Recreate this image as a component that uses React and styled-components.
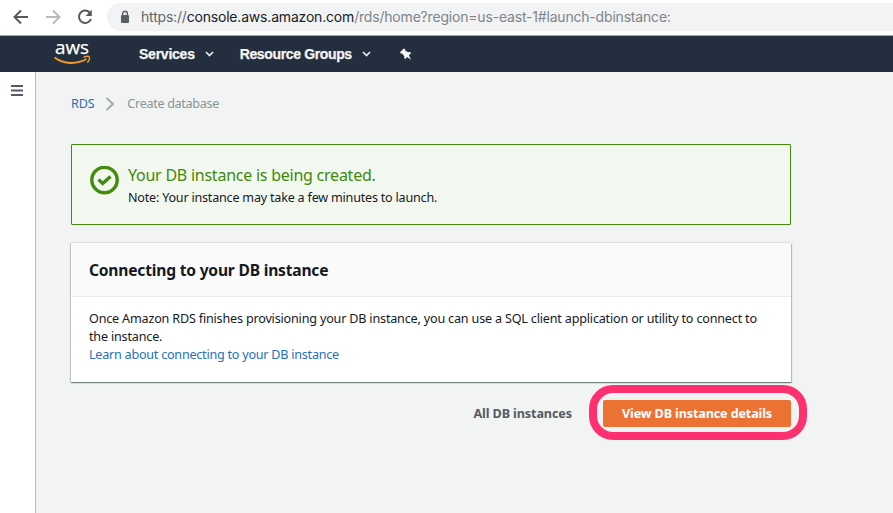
import React from 'react';
import styled, { createGlobalStyle } from 'styled-components';

const Global = createGlobalStyle`
  * { box-sizing: border-box; }
  body { margin: 0; background: #f2f3f3; overflow: hidden; }
  button { font: inherit; border: 0; margin: 0; }
`;

const Page = styled.div`
  height: 513px;
  display: flex;
  flex-direction: column;
  font-family: 'Noto Sans', 'Open Sans', sans-serif;
  font-size: 12.6px;
  line-height: 18px;
  color: #16191f;
  white-space: nowrap;
`;

const BrowserBar = styled.div`
  flex: none;
  height: 36px;
  display: flex;
  align-items: flex-start;
  background: #fff;
  border-bottom: 1px solid #a9abb0;
`;

const BrowserIcons = styled.div`
  width: 107px;
  padding: 8px 0 0 12px;
  display: flex;
  gap: 14px;
`;

const AddressBar = styled.div`
  flex: 1;
  height: 28px;
  margin-top: 3px;
  padding-left: 13px;
  display: flex;
  align-items: center;
  background: #f1f3f4;
  border-radius: 14px 0 0 14px;
`;

const Url = styled.div`
  margin-left: 11px;
  font: 14px/28px Inter, sans-serif;
  letter-spacing: ${(p) => p.$spacing}px;
  color: #808488;
`;
const UrlScheme = styled.span`color: #63676b;`;
const UrlHost = styled.span`color: #202124;`;

const ConsoleNav = styled.nav`
  flex: none;
  height: 36px;
  display: flex;
  align-items: center;
  background: #232f3e;
  color: #f5f5f5;
`;

const Logo = styled.svg`
  width: 40px;
  height: 36px;
  margin-left: 52px;
  overflow: visible;
`;

const NavItem = styled.div`
  display: flex;
  align-items: center;
  gap: 10px;
  margin-left: ${(p) => p.$gap}px;
  font: bold 14px/36px 'Liberation Sans', sans-serif;
  letter-spacing: ${(p) => p.$spacing || 0}px;
  -webkit-text-stroke: 0.25px #f5f5f5;
`;

const Workspace = styled.div`
  flex: 1;
  display: flex;
`;

const Sidebar = styled.aside`
  width: 36px;
  padding: 13px 0 0 11px;
  background: #fff;
  border-right: 1px solid #b4bbbd;
`;

const Main = styled.main`
  width: 721px;
  margin-left: 35px;
  padding-top: 23px;
`;

const Breadcrumbs = styled.div`
  display: flex;
  align-items: center;
  height: 18px;
  color: #879596;
`;

const Text = styled.span`
  letter-spacing: ${(p) => p.$spacing || 0}px;
`;

const Link = styled.a`
  color: #1f70b8;
  letter-spacing: ${(p) => p.$spacing || 0}px;
`;

const Alert = styled.section`
  height: 81px;
  margin-top: 31px;
  padding: 20px 0 0 18px;
  width: 720px;
  display: flex;
  gap: 8px;
  background: #f2f8f0;
  border: 1px solid #438a0d;
  border-radius: 1px;
`;

const AlertIcon = styled.svg`
  flex: none;
  width: 30px;
  height: 30px;
  margin-top: 1px;
`;

const AlertTitle = styled.h1`
  margin: 0;
  font-size: 16px;
  font-weight: 400;
  line-height: 20px;
  color: #3f880b;
  letter-spacing: ${(p) => p.$spacing}px;
`;

const AlertNote = styled.div`
  margin-top: 3px;
  line-height: 20px;
  letter-spacing: ${(p) => p.$spacing}px;
`;

const Card = styled.section`
  width: 720px;
  height: 139px;
  margin-top: 18px;
  background: #fff;
  box-shadow: 0 1px 1px rgba(0, 28, 36, 0.4), 1px 1px 1px rgba(0, 28, 36, 0.2),
    -1px 0 1px rgba(0, 28, 36, 0.15), 0 -1px 0 #e3e6e6;
`;

const CardHeader = styled.h2`
  height: 54px;
  margin: 0;
  padding-left: 18px;
  font-size: 15.6px;
  font-weight: 700;
  line-height: 55px;
  letter-spacing: ${(p) => p.$spacing}px;
  background: #fafafa;
  border-bottom: 1px solid #eaeded;
`;

const CardBody = styled.div`
  display: flex;
  flex-direction: column;
  padding: 13px 18px;
`;

const Actions = styled.div`
  display: flex;
  justify-content: flex-end;
  align-items: center;
  width: 736px;
  margin-top: 3px;
`;

const PlainButton = styled.button`
  padding: 2px 0 0;
  background: none;
  color: #545b64;
  font-weight: 700;
  letter-spacing: ${(p) => p.$spacing}px;
`;

const Highlight = styled.div`
  width: 218px;
  height: 55px;
  margin-left: 17px;
  padding: 7px 6px;
  border: 8px solid #ff3070;
  border-radius: 24px;
`;

const PrimaryButton = styled.button`
  width: 188px;
  height: 27px;
  padding: 0;
  display: block;
  background: #ec7233;
  border-radius: 2px;
  color: #fff;
  font-weight: 700;
  line-height: 27px;
  letter-spacing: ${(p) => p.$spacing}px;
`;

const Svg = styled.svg`
  flex: none;
  display: block;
  margin-left: ${(p) => p.$left || 0}px;
  margin-right: ${(p) => p.$right || 0}px;
`;

const Arrow = ({ color, flip }) => (
  <Svg width="18" height="18" viewBox="0 0 18 18" fill="none" stroke={color} strokeWidth="2">
    <path d={flip ? 'M2 9H15M9 2.5L15.5 9L9 15.5' : 'M16 9H3M9 2.5L2.5 9L9 15.5'} />
  </Svg>
);

const Caret = () => (
  <Svg width="9" height="6" viewBox="0 0 9 6" fill="none" stroke="#e8eaed" strokeWidth="1.7">
    <path d="M1 1L4.5 4.5L8 1" />
  </Svg>
);

export default function App() {
  return (
    <Page>
      <Global />
      <BrowserBar>
        <BrowserIcons>
          <Arrow color="#56595e" />
          <Arrow color="#b7b9bb" flip />
          <Svg width="18" height="18" viewBox="0 0 18 18" fill="none">
            <path d="M13.7 4.5A6.2 6.2 0 1 0 15 11" stroke="#56595e" strokeWidth="2" />
            <path d="M15.8 1.8V8H9.6Z" fill="#56595e" />
          </Svg>
        </BrowserIcons>
        <AddressBar>
          <Svg width="10" height="14" viewBox="0 0 10 14">
            <path d="M2.6 6V3.6a2.4 2.4 0 0 1 4.8 0V6" fill="none" stroke="#5a5d61" strokeWidth="1.4" />
            <rect x="1" y="5" width="8" height="8" rx="1" fill="#5a5d61" />
          </Svg>
          <Url $spacing={-0.19}>
            <UrlScheme>https://</UrlScheme>
            <UrlHost>console.aws.amazon.com</UrlHost>
            /rds/home?region=us-east-1#launch-dbinstance:
          </Url>
        </AddressBar>
      </BrowserBar>

      <ConsoleNav>
        <Logo viewBox="0 0 40 36">
          <text x="3" y="18" textLength="34" lengthAdjust="spacingAndGlyphs" fill="#fff" stroke="#fff" strokeWidth="0.25" fontFamily="Open Sans, sans-serif" fontSize="18.5">aws</text>
          <path d="M2.5 21.5C12 28.5 25 28.5 34.5 23" fill="none" stroke="#f79b22" strokeWidth="2" />
          <path d="M31.5 21.3C34 20.2 36.5 20 37.3 20.9C37.8 22.2 36.8 25 35.2 26.6" fill="none" stroke="#f79b22" strokeWidth="1.4" />
        </Logo>
        <NavItem $gap={47} $spacing={-0.24}>Services<Caret /></NavItem>
        <NavItem $gap={26} $spacing={-0.36}>Resource Groups<Caret /></NavItem>
        <Svg $left={29} width="12" height="12" viewBox="0 0 12 12" fill="#f5f5f5">
          <path d="M3.8 .4L5.3 1.3L5.1 2.6L8.2 4.3L10.1 3.9L11.2 5.1L8.9 7.2L11 11.7L7.1 9L5.4 11L4.2 10L4.3 8L1.8 5.5L.5 5.4L.2 3.9Z" />
        </Svg>
      </ConsoleNav>

      <Workspace>
        <Sidebar>
          <Svg width="12" height="11" viewBox="0 0 12 11" fill="#545b64">
            <path d="M0 0H12V2H0ZM0 4.5H12V6.5H0ZM0 9H12V11H0Z" />
          </Svg>
        </Sidebar>
        <Main>
          <Breadcrumbs>
            <Link $spacing={-0.2}>RDS</Link>
            <Svg $left={11} $right={12} width="10" height="14" viewBox="0 0 10 14" fill="none" stroke="#a3adae" strokeWidth="2">
              <path d="M1.5 1L8 7L1.5 13" />
            </Svg>
            <Text $spacing={-0.31}>Create database</Text>
          </Breadcrumbs>

          <Alert>
            <AlertIcon viewBox="0 0 30 30" fill="none" stroke="#438a0d">
              <circle cx="14.5" cy="14" r="12.7" strokeWidth="3.4" />
              <path d="M8.5 13.5L12.7 17.5L20.5 10.5" strokeWidth="3.4" />
            </AlertIcon>
            <div>
              <AlertTitle $spacing={-0.24}>Your DB instance is being created.</AlertTitle>
              <AlertNote $spacing={-0.22}>Note: Your instance may take a few minutes to launch.</AlertNote>
            </div>
          </Alert>

          <Card>
            <CardHeader $spacing={-0.2}>Connecting to your DB instance</CardHeader>
            <CardBody>
              <Text $spacing={-0.187}>Once Amazon RDS finishes provisioning your DB instance, you can use a SQL client application or utility to connect to</Text>
              <Text $spacing={-0.187}>the instance.</Text>
              <Link $spacing={-0.24}>Learn about connecting to your DB instance</Link>
            </CardBody>
          </Card>

          <Actions>
            <PlainButton $spacing={-0.1}>All DB instances</PlainButton>
            <Highlight>
              <PrimaryButton $spacing={-0.13}>View DB instance details</PrimaryButton>
            </Highlight>
          </Actions>
        </Main>
      </Workspace>
    </Page>
  );
}
